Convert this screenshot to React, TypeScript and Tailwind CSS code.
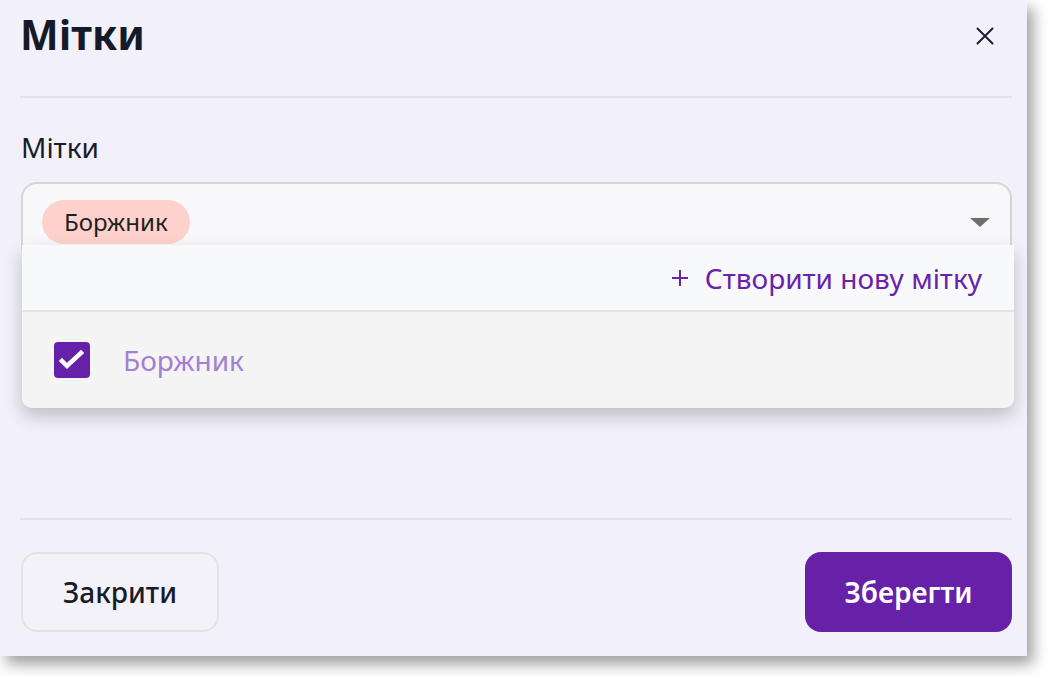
const font = { fontFamily: '"Noto Sans", "Open Sans", sans-serif' };

const CloseIcon = () => (
  <svg width="18" height="18" viewBox="0 0 18 18" fill="none" stroke="#1c2130" strokeWidth="2" strokeLinecap="round">
    <path d="M1.5 1.5 16.5 16.5M16.5 1.5 1.5 16.5" />
  </svg>
);

const PlusIcon = () => (
  <svg width="18" height="18" viewBox="0 0 18 18" fill="none" stroke="#6a22ab" strokeWidth="2">
    <path d="M9 1v16M1 9h16" />
  </svg>
);

const Checkbox = () => (
  <div className="w-[36px] h-[36px] rounded-[4px] bg-[#6521a8] flex items-center justify-center shrink-0">
    <svg width="36" height="36" viewBox="0 0 36 36" fill="none" stroke="#ffffff" strokeWidth="4.5" strokeLinecap="square">
      <path d="M8 19l5 5 14-13" />
    </svg>
  </div>
);

export default function App() {
  return (
    <div className="w-[1048px] h-[676px] bg-white overflow-hidden" style={font}>
      <div className="w-[1027px] h-[656px] bg-[#f2f0f9] shadow-[6px_8px_14px_rgba(0,0,0,0.38)] pl-[20px] pr-[15px] flex flex-col">
        {/* header */}
        <div className="h-[96px] flex items-start justify-between pt-[10px]">
          <h1 className="text-[41px] leading-[48px] font-bold text-[#151a28]">Мітки</h1>
          <button className="mt-[17px] mr-[18px]">
            <CloseIcon />
          </button>
        </div>
        <div className="h-[2px] bg-[#e4e2ea]" />

        {/* body */}
        <div className="h-[420px] flex flex-col">
          <label className="mt-[31px] pl-[1px] text-[28px] leading-[36px] text-[#181c28]">Мітки</label>
          <div className="mt-[17px] ml-[1px] relative h-[80px] border-2 border-[#d5d4db] rounded-[16px] bg-[#f8f8fb] flex items-start justify-between pt-[16px] pl-[19px] pr-[20px]">
            <span className="h-[44px] px-[22px] rounded-full bg-[#fdd2cc] flex items-center text-[24px] text-[#1f1f22]">
              Боржник
            </span>
            <span className="mt-[18px] w-0 h-0 border-l-[10px] border-r-[10px] border-t-[9px] border-l-transparent border-r-transparent border-t-[#6e6e6e]" />

            {/* dropdown */}
            <div className="absolute top-[61px] left-[-1px] w-[992px] rounded-b-[10px] overflow-hidden shadow-[0_8px_18px_rgba(0,0,0,0.22)] z-10">
              <div className="h-[67px] bg-[#f8f9fb] flex items-center justify-end gap-[16px] pr-[32px] border-b-2 border-[#e4e4e8]">
                <PlusIcon />
                <span className="text-[28px] text-[#6a22ab]">Створити нову мітку</span>
              </div>
              <div className="h-[96px] bg-[#f4f4f4] flex items-center pl-[32px] gap-[33px]">
                <Checkbox />
                <span className="text-[28px] text-[#a57fd2]">Боржник</span>
              </div>
            </div>
          </div>
        </div>
        <div className="h-[2px] bg-[#e4e2ea]" />

        {/* footer */}
        <div className="flex justify-between pt-[32px] pl-[1px]">
          <button className="w-[198px] h-[80px] rounded-[16px] border-2 border-[#e4e2e9] bg-[#f3f2f9] text-[28px] font-medium text-[#181c28]">
            Закрити
          </button>
          <button className="w-[207px] h-[80px] rounded-[16px] bg-[#6621a8] text-[28px] font-semibold text-white">
            Зберегти
          </button>
        </div>
      </div>
    </div>
  );
}
